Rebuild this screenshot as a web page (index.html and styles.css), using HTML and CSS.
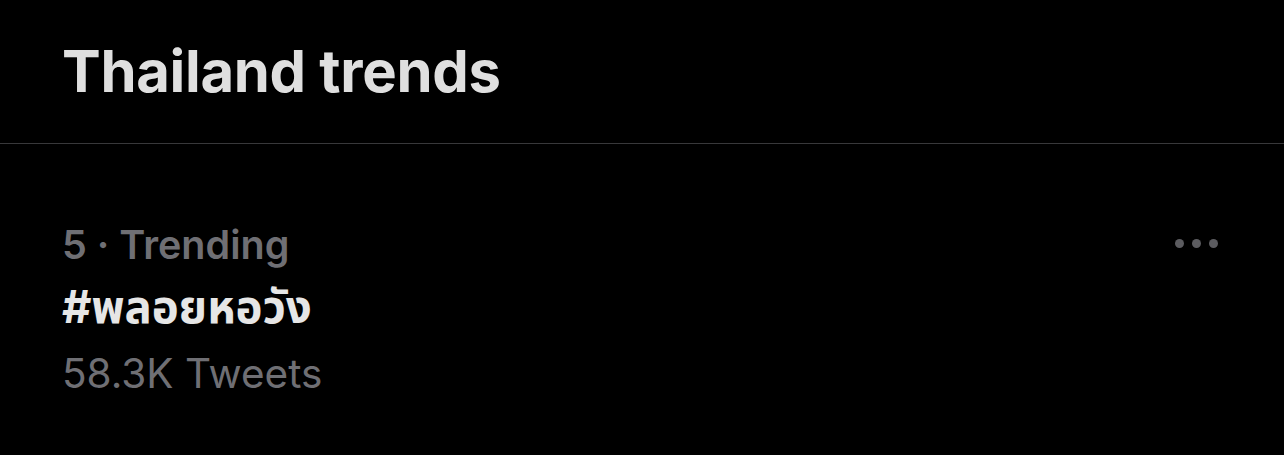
FILE: index.html
```html
<!DOCTYPE html>
<html lang="en">
<head>
<meta charset="utf-8">
<link rel="stylesheet" href="styles.css">
</head>
<body>
<div class="page">
  <header class="header">
    <h1 class="title">Thailand trends</h1>
  </header>
  <section class="trend">
    <div class="trend-text">
      <div class="meta">5 · Trending</div>
      <div class="tag">#พลอยหอวัง</div>
      <div class="count">58.3K Tweets</div>
    </div>
    <div class="more" aria-label="More">
      <span class="dot"></span><span class="dot"></span><span class="dot"></span>
    </div>
  </section>
</div>
</body>
</html>
```
FILE: styles.css
```css
html, body {
  margin: 0;
  padding: 0;
  background: #000;
}
body {
  width: 1284px;
  height: 455px;
  overflow: hidden;
  font-family: Inter, "Noto Sans", "Noto Sans Thai", sans-serif;
}
.page {
  display: flex;
  flex-direction: column;
}
.header {
  height: 143px;
  border-bottom: 1px solid #38383a;
  padding: 0 62px;
  display: flex;
  align-items: flex-start;
}
.title {
  margin: 0;
  padding-top: 38px;
  font-size: 58px;
  font-weight: 700;
  letter-spacing: -0.3px;
  line-height: 66px;
  color: #dfdfdf;
}
.trend {
  display: flex;
  justify-content: space-between;
  align-items: flex-start;
  padding: 76px 62px 0 62px;
}
.trend-text {
  display: flex;
  flex-direction: column;
}
.meta {
  font-size: 39.5px;
  font-weight: 600;
  color: #6f6f74;
  line-height: 50px;
}
.tag {
  font-size: 45.5px;
  font-weight: 700;
  color: #e6e6e6;
  line-height: 74px;
}
.count {
  font-size: 40.5px;
  font-weight: 400;
  color: #6f6f74;
  line-height: 60px;
}
.more {
  display: flex;
  gap: 8px;
  padding-top: 19px;
  margin-right: 4px;
}
.dot {
  width: 9px;
  height: 9px;
  border-radius: 50%;
  background: #5c5c60;
}
```
